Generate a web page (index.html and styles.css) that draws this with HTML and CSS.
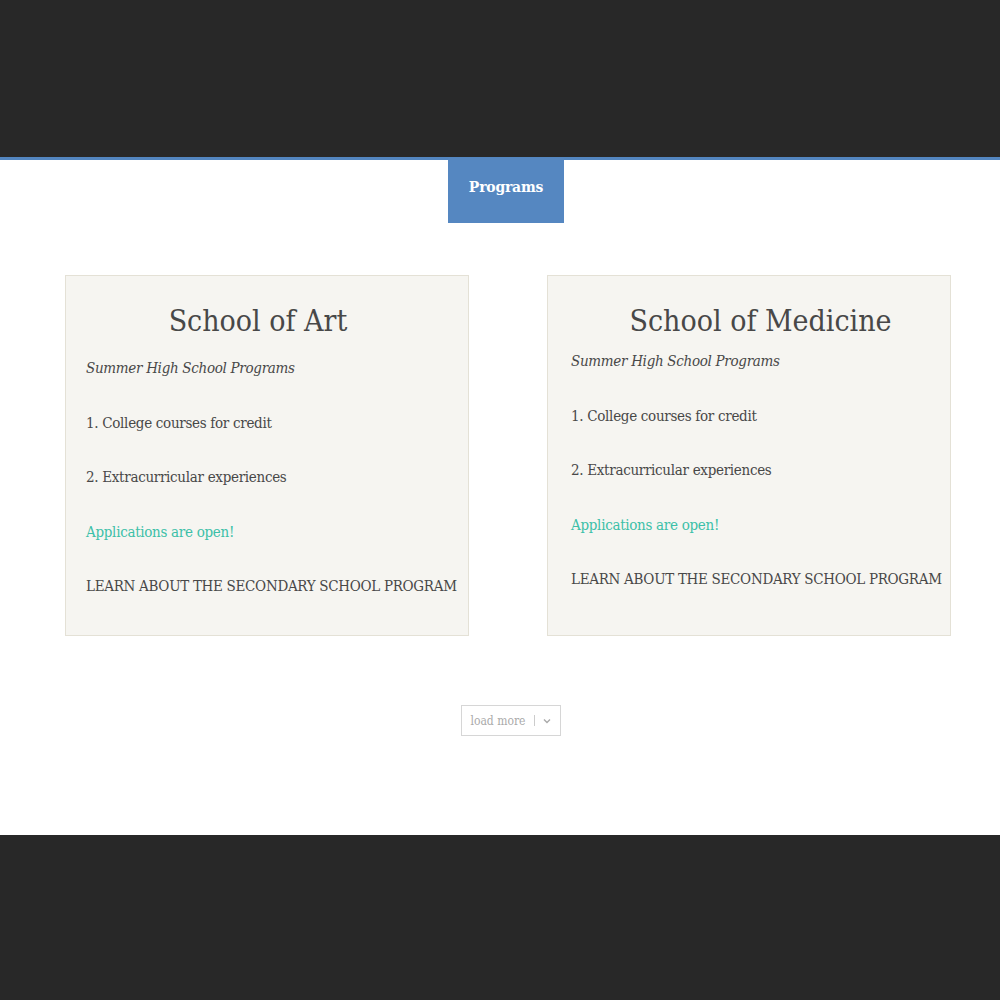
FILE: index.html
```html
<!DOCTYPE html>
<html>
<head>
<meta charset="utf-8">
<link rel="stylesheet" href="styles.css">
</head>
<body>
<header class="top"></header>
<nav class="tabs"><div class="tab">Programs</div></nav>
<main class="content">
  <section class="grid">
    <article class="card card--art">
      <h2 class="card-title">School of Art</h2>
      <p class="card-sub">Summer High School Programs</p>
      <p class="card-item">1. College courses for credit</p>
      <p class="card-item">2. Extracurricular experiences</p>
      <p class="card-item card-open">Applications are open!</p>
      <p class="card-item card-link">LEARN ABOUT THE SECONDARY SCHOOL PROGRAM</p>
    </article>
    <article class="card card--med">
      <h2 class="card-title">School of Medicine</h2>
      <p class="card-sub">Summer High School Programs</p>
      <p class="card-item">1. College courses for credit</p>
      <p class="card-item">2. Extracurricular experiences</p>
      <p class="card-item card-open">Applications are open!</p>
      <p class="card-item card-link">LEARN ABOUT THE SECONDARY SCHOOL PROGRAM</p>
    </article>
  </section>
  <div class="more-wrap">
    <button class="more"><span class="more-label">load more</span><span class="more-sep"></span><svg class="more-icon" width="8" height="6" viewBox="0 0 8 6"><path d="M1 1.5 L4 4.5 L7 1.5" fill="none" stroke="#aaa" stroke-width="1.4"/></svg></button>
  </div>
</main>
<footer class="bottom"></footer>
</body>
</html>
```
FILE: styles.css
```css
* { box-sizing: border-box; }
html, body { margin: 0; padding: 0; background: #fff; }
body { font-family: "DejaVu Serif", serif; font-stretch: condensed; color: #484848; }
.top { height: 160px; background: #282828; border-bottom: 3px solid #5386c0; }
.tabs { display: flex; justify-content: center; padding-left: 12px; }
.tab { width: 116px; height: 65px; background: #5587c1; color: #fff; font-size: 15.5px; font-weight: bold; letter-spacing: -0.2px; display: flex; align-items: center; justify-content: center; margin-top: -2px; padding-bottom: 8px; }
.content { height: 612px; padding-top: 52px; }
.grid { display: grid; grid-template-columns: 404px 404px; column-gap: 78px; padding-left: 65px; }
.card { height: 361px; background: #f6f5f1; border: 1px solid #e4e1d6; padding: 25px 0 0 20px; }
.card-title { margin: 0; font-size: 30px; font-weight: normal; line-height: 40px; color: #484848; text-align: center; padding-right: 38px; }
.card-sub { margin: 15px 0 0; font-size: 15px; font-style: italic; letter-spacing: -0.3px; line-height: 24px; }
.card-item { margin: 30.5px 0 0; font-size: 15px; letter-spacing: -0.3px; line-height: 24px; white-space: nowrap; }
.card-open { color: #3cc0a8; }
.card-link { text-transform: uppercase; }
.card--med { padding-left: 23px; }
.card--med .card-title { padding-right: 0; padding-left: 0; }
.card--med .card-sub { margin-top: 8px; }
.more-wrap { display: flex; justify-content: center; padding-top: 69px; padding-left: 21px; }
.more { width: 100px; height: 31px; border: 1px solid #d6d6d6; background: #fff; display: flex; align-items: center; justify-content: center; gap: 8px; font-family: inherit; font-stretch: condensed; font-size: 12px; color: #aaa; padding: 0; }
.more-sep { width: 1px; height: 11px; background: #ccc; }
.more-icon { display: block; }
.bottom { height: 165px; background: #282828; }
```
